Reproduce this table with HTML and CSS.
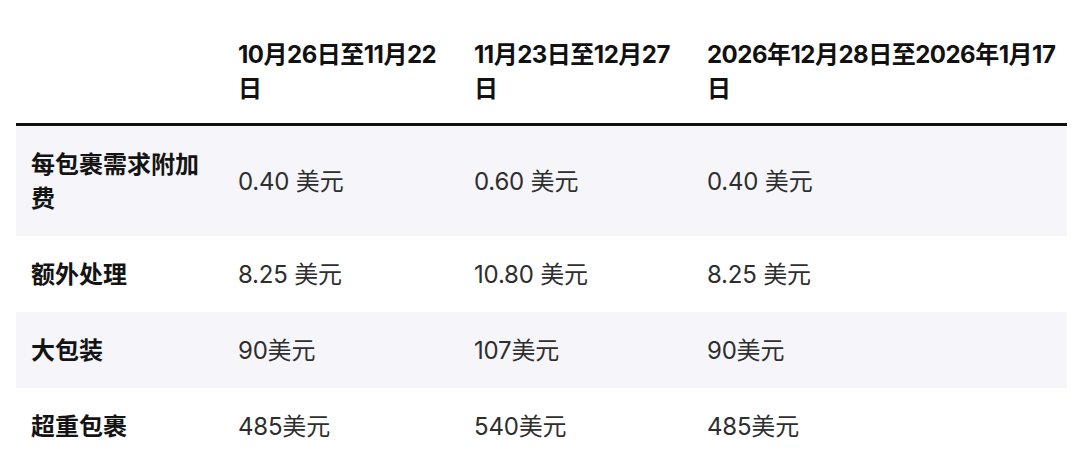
FILE: index.html
```html
<!DOCTYPE html>
<html lang="zh-CN">
<head>
<meta charset="utf-8">
<title>附加费</title>
<link rel="stylesheet" href="styles.css">
</head>
<body>
<table class="rates">
  <colgroup>
    <col class="c1"><col class="c2"><col class="c3"><col class="c4">
  </colgroup>
  <thead>
    <tr>
      <th></th>
      <th>10月26日至11月22日</th>
      <th>11月23日至12月27日</th>
      <th class="last">2026年12月28日至2026年1月17日</th>
    </tr>
  </thead>
  <tbody>
    <tr class="alt">
      <th>每包裹需求附加费</th>
      <td>0.40 美元</td>
      <td>0.60 美元</td>
      <td>0.40 美元</td>
    </tr>
    <tr>
      <th>额外处理</th>
      <td>8.25 美元</td>
      <td>10.80 美元</td>
      <td>8.25 美元</td>
    </tr>
    <tr class="alt">
      <th>大包装</th>
      <td>90美元</td>
      <td>107美元</td>
      <td>90美元</td>
    </tr>
    <tr>
      <th>超重包裹</th>
      <td>485美元</td>
      <td>540美元</td>
      <td>485美元</td>
    </tr>
  </tbody>
</table>
</body>
</html>
```

FILE: styles.css
```css
html, body {
  margin: 0;
  padding: 0;
  background: #ffffff;
}

body {
  font-family: Inter, "Noto Sans CJK SC", sans-serif;
  font-size: 24px;
  line-height: 34px;
  color: #1a1a1a;
}

.rates {
  margin-left: 16px;
  width: 1051px;
  border-collapse: collapse;
  table-layout: fixed;
}

.c1 { width: 207px; }
.c2 { width: 236px; }
.c3 { width: 233px; }
.c4 { width: 375px; }

.rates thead th {
  text-align: left;
  vertical-align: top;
  font-weight: 700;
  color: #111111;
  padding: 38px 15px 17px;
  border-bottom: 3px solid #111111;
  letter-spacing: -0.5px;
}

.rates thead th.last {
  padding-right: 4px;
}

.rates tbody th {
  text-align: left;
  font-weight: 700;
  color: #141414;
  padding: 22px 15px 20px;
  vertical-align: middle;
}

.rates tbody td {
  font-weight: 400;
  color: #2e2e2e;
  padding: 22px 15px 20px;
  vertical-align: middle;
  letter-spacing: -0.2px;
}

.rates tbody tr.alt {
  background: #f5f5fa;
}
```
